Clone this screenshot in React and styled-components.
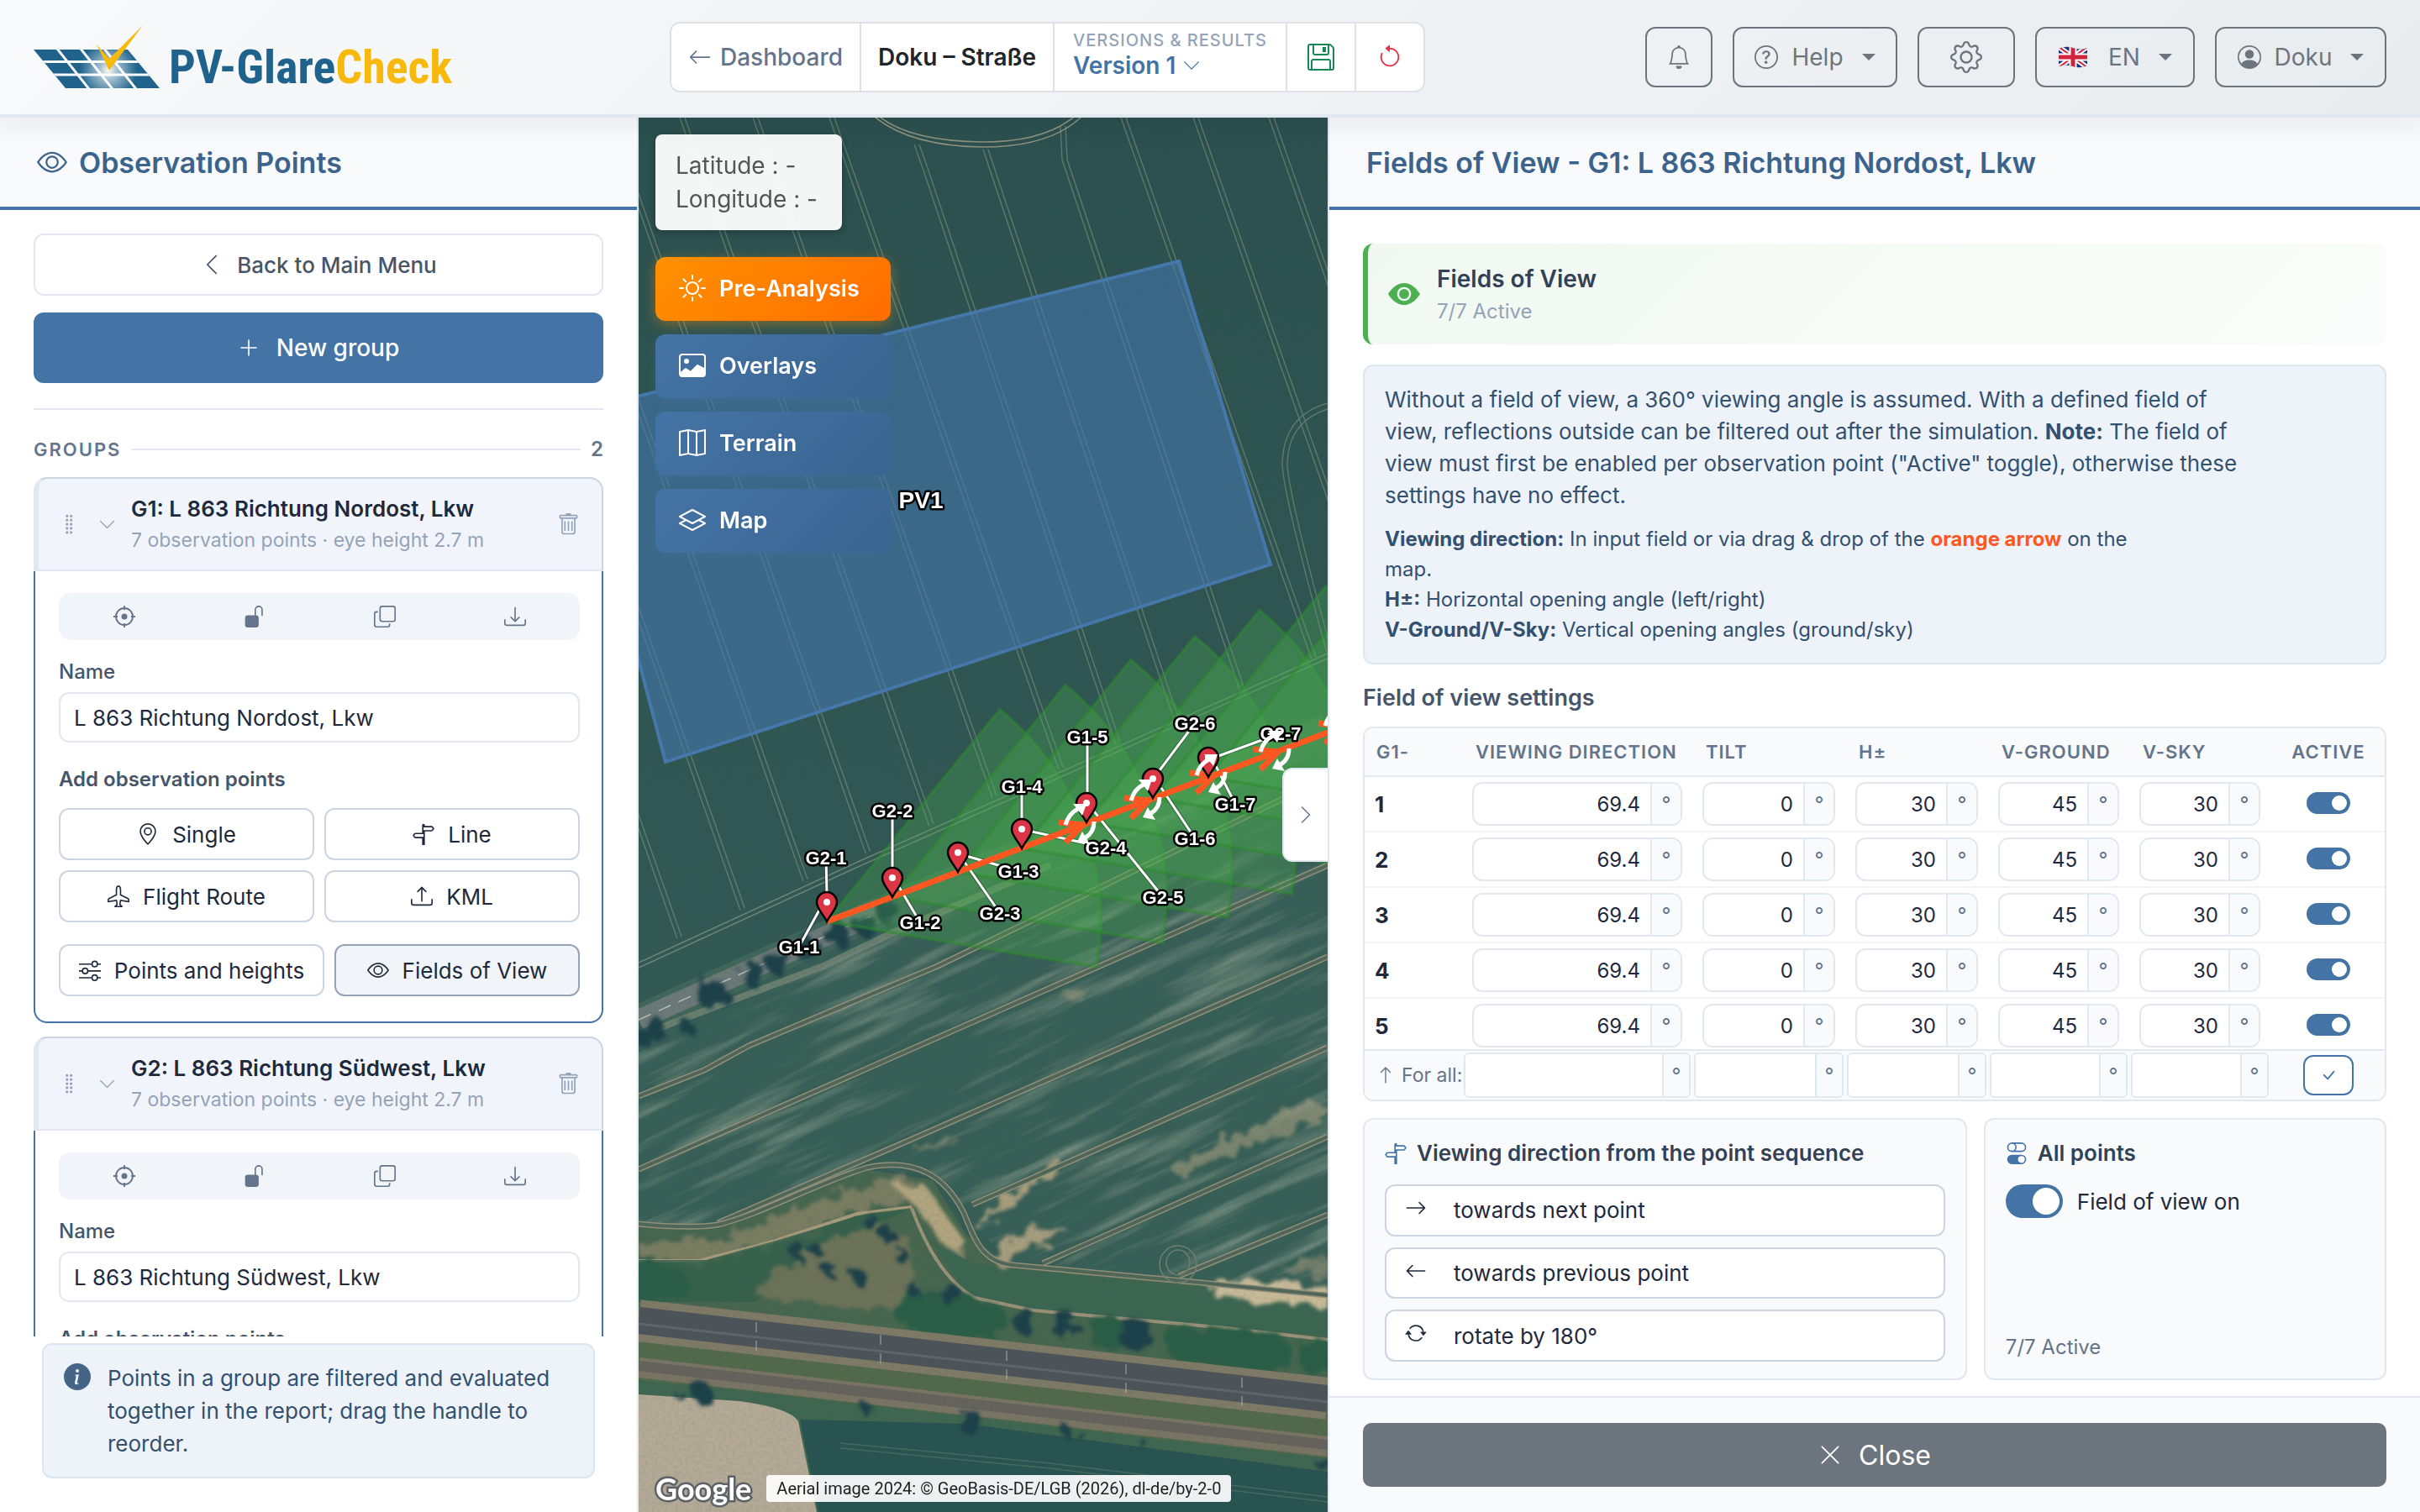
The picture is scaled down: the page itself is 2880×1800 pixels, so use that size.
import { useState } from 'react';
import styled, { createGlobalStyle, css } from 'styled-components';
import {
  BsAirplane,
  BsArrowCounterclockwise,
  BsArrowLeft,
  BsArrowRepeat,
  BsArrowRight,
  BsArrowUp,
  BsBell,
  BsCheckLg,
  BsChevronDown,
  BsChevronLeft,
  BsChevronRight,
  BsCopy,
  BsDownload,
  BsEye,
  BsEyeFill,
  BsFloppy,
  BsGear,
  BsGeoAlt,
  BsGripVertical,
  BsImage,
  BsInfoCircleFill,
  BsLayers,
  BsMap,
  BsPersonCircle,
  BsPlusLg,
  BsQuestionCircle,
  BsSignpostSplit,
  BsSliders,
  BsSun,
  BsToggles,
  BsTrash,
  BsUnlockFill,
  BsUpload,
  BsXLg,
} from 'react-icons/bs';

const GlobalStyle = createGlobalStyle`
  * {
    box-sizing: border-box;
  }
  body {
    margin: 0;
    font-family: Inter, 'Liberation Sans', sans-serif;
    font-size: 28px;
    color: #1e293b;
    background: #fff;
  }
  button, input {
    font: inherit;
    color: inherit;
    margin: 0;
  }
  button {
    cursor: pointer;
  }
  svg {
    flex: none;
  }
`;

// Shell

const Shell = styled.div`
  display: flex;
  flex-direction: column;
  height: 100vh;
`;

const Columns = styled.div`
  display: grid;
  grid-template-columns: 760px minmax(0, 1fr) 1300px;
  flex: 1;
  min-height: 0;
`;

// Top bar

const TopBar = styled.header`
  position: relative;
  z-index: 2;
  display: grid;
  grid-template-columns: 757px 1fr auto;
  align-items: center;
  height: 140px;
  padding: 0 40px;
  border-bottom: 4px solid #e2e8f0;
  background: linear-gradient(135deg, #f8f9fa, #e9ecef);
`;

const TopShadow = styled.div`
  position: relative;
  z-index: 1;
  height: 0;
  box-shadow: 0 0 28px 6px rgba(0, 0, 0, 0.12);
`;

const Logo = styled.a`
  display: flex;
  align-items: flex-end;
  gap: 11px;
  height: 76px;
  text-decoration: none;
`;

const LogoText = styled.span`
  font-family: 'Roboto Condensed', 'Liberation Sans Narrow', sans-serif;
  font-size: 56px;
  font-weight: 700;
  line-height: 52px;
  color: #1f638c;
`;

const LogoAccent = styled.span`
  color: #f7b90b;
`;

const ProjectBar = styled.nav`
  display: flex;
  justify-self: start;
  height: 84px;
  border: 2px solid #dee2e6;
  border-radius: 12px;
  background: #fff;
`;

const ProjectItem = styled.button`
  display: flex;
  align-items: center;
  justify-content: center;
  gap: 10px;
  min-width: 82px;
  padding: 0 20px;
  border: 0;
  border-left: ${p => (p.$first ? 0 : '2px solid #dee2e6')};
  background: none;
  color: ${p => p.$color || '#212529'};
  font-weight: ${p => p.$weight || 500};
  text-decoration: none;
`;

const VersionItem = styled(ProjectItem)`
  flex-direction: column;
  align-items: flex-start;
  gap: 0;
  padding: 0 22px 6px;
  color: #4473a5;
  font-weight: 600;
`;

const VersionCaption = styled.span`
  color: #94a3b8;
  font-size: 20px;
  font-weight: 500;
  line-height: 26px;
  letter-spacing: 1px;
`;

const VersionValue = styled.span`
  display: flex;
  align-items: center;
  gap: 8px;
  line-height: 34px;
`;

const TopActions = styled.div`
  display: flex;
  gap: 24px;
`;

const TopButton = styled.button`
  display: flex;
  align-items: center;
  justify-content: center;
  gap: 16px;
  width: ${p => p.$width}px;
  height: 72px;
  border: 2px solid #6c757d;
  border-radius: 12px;
  background: none;
  color: #6c757d;
`;

const Language = styled.span`
  padding-left: 8px;
`;

const Caret = styled.span`
  margin-left: 6px;
  border: 8px solid transparent;
  border-top-color: #6c757d;
  border-bottom: 0;
`;

// Shared panel parts

const Panel = styled.section`
  display: flex;
  flex-direction: column;
  min-height: 0;
  border: 0 solid #e2e8f0;
  border-width: ${p => (p.$side === 'left' ? '0 2px 0 0' : '0 0 0 2px')};
`;

const PanelTitle = styled.h1`
  display: flex;
  align-items: center;
  gap: 14px;
  height: 110px;
  margin: 0;
  padding: 0 44px;
  border-bottom: 4px solid #4473a5;
  background: #f8fafc;
  color: #3b638c;
  font-size: 34px;
  font-weight: 600;
  flex: none;
`;

const Button = styled.button`
  display: flex;
  align-items: center;
  justify-content: center;
  gap: 16px;
  height: 62px;
  border: 2px solid #cbd5e1;
  border-radius: 12px;
  background: #fff;
  color: #1e293b;
  font-size: 26px;
  ${p =>
    p.$active &&
    css`
      border-color: #94a3b8;
      background: #f1f5f9;
    `}
`;

// Left panel

const Sidebar = styled.div`
  display: flex;
  flex-direction: column;
  flex: 1;
  min-height: 0;
  padding: 28px 40px 40px;
`;

const BackButton = styled(Button)`
  height: 74px;
  border-color: #e2e8f0;
  color: #475569;
  font-weight: 500;
  flex: none;
`;

const NewButton = styled(BackButton)`
  gap: 20px;
  height: 84px;
  margin-top: 20px;
  border: 0;
  background: #4473a5;
  color: #fff;
  font-size: 28px;
`;

const Rule = styled.hr`
  width: 100%;
  margin: 30px 0;
  border: 0;
  border-top: 2px solid #e2e8f0;
  flex: none;
`;

const GroupsHead = styled.h2`
  display: flex;
  align-items: center;
  gap: 12px;
  margin: 0 0 16px;
  color: #64748b;
  font-size: 22px;
  font-weight: 600;
  line-height: 34px;
  letter-spacing: 2px;
  &::before {
    content: '';
    order: 1;
    flex: 1;
    height: 2px;
    background: #e2e8f0;
  }
`;

const GroupCount = styled.span`
  order: 2;
  font-size: 24px;
  letter-spacing: 0;
`;

const GroupList = styled.div`
  display: flex;
  flex-direction: column;
  gap: 16px;
  flex: 1;
  min-height: 0;
  overflow: hidden;
`;

const Group = styled.article`
  flex: none;
`;

const GroupHead = styled.div`
  display: flex;
  align-items: center;
  height: 112px;
  padding: 0 26px 0 24px;
  border: 2px solid #cbd5e1;
  border-left: 6px solid #e2e8f0;
  border-bottom-color: #e2e8f0;
  border-radius: 16px 16px 0 0;
  background: #f1f5fb;
  color: #94a3b8;
`;

const GroupName = styled.div`
  flex: 1;
  margin-left: 18px;
`;

const GroupTitle = styled.h3`
  margin: 0;
  color: #1e293b;
  font-size: 26px;
  font-weight: 600;
  line-height: 38px;
`;

const GroupMeta = styled.div`
  font-size: 23px;
  line-height: 36px;
`;

const IconButton = styled.button`
  display: flex;
  align-items: center;
  justify-content: center;
  padding: 0;
  border: 0;
  background: none;
  color: inherit;
`;

const Chevron = styled(IconButton)`
  margin-left: 21px;
`;

const GroupBody = styled.div`
  padding: 26px 26px 30px 28px;
  border: 2px solid #4473a5;
  border-top: 0;
  border-radius: 0 0 16px 16px;
`;

const GroupTools = styled.div`
  display: grid;
  grid-template-columns: repeat(4, 1fr);
  height: 56px;
  border-radius: 14px;
  background: #f1f5f9;
  color: #64748b;
`;

const FieldLabel = styled.label`
  display: block;
  padding: 22px 0 8px;
  color: #475569;
  font-size: 24px;
  font-weight: ${p => p.$weight || 500};
  line-height: 32px;
`;

const TextInput = styled.input`
  width: 100%;
  height: 60px;
  padding: 0 16px;
  border: 2px solid #e2e8f0;
  border-radius: 12px;
  font-size: 26px;
`;

const AddTitle = styled(FieldLabel).attrs({ as: 'div' })`
  padding: 28px 0 18px;
`;

const ButtonGrid = styled.div`
  display: grid;
  grid-template-columns: 1fr 1fr;
  gap: 12px;
`;

const ButtonRow = styled.div`
  display: grid;
  grid-template-columns: 316px 1fr;
  gap: 12px;
  margin-top: 26px;
`;

const Hint = styled.aside`
  display: flex;
  gap: 20px;
  margin: 8px 10px 0;
  padding: 20px 24px;
  border: 2px solid #dbe7f0;
  border-radius: 12px;
  background: #eef3fa;
  color: #33506f;
  font-size: 26px;
  line-height: 39px;
  svg {
    margin-top: 2px;
    color: #456486;
  }
`;

// Map

const MapArea = styled.main`
  position: relative;
  overflow: hidden;
  background: #2f5350;
`;

const MapCanvas = styled.svg`
  display: block;
  width: 100%;
  height: 100%;
`;

const MapOverlay = styled.div`
  position: absolute;
  top: 20px;
  left: 20px;
  display: flex;
  flex-direction: column;
  align-items: flex-start;
  gap: 16px;
`;

const Coordinates = styled.div`
  width: 222px;
  margin-bottom: 16px;
  padding: 17px 24px;
  border-radius: 8px;
  background: rgba(255, 255, 255, 0.95);
  box-shadow: 0 2px 8px rgba(0, 0, 0, 0.3);
  color: #555;
  font-size: 28px;
  line-height: 40px;
  white-space: pre;
`;

const MapButton = styled.button`
  display: flex;
  align-items: center;
  gap: 16px;
  width: 280px;
  height: 76px;
  padding: 0 28px 2px;
  border: 0;
  border-radius: 12px;
  background: linear-gradient(135deg, #4473a5, #3a6592);
  box-shadow: 0 4px 12px rgba(68, 115, 165, 0.3);
  color: #fff;
  font-size: 27px;
  font-weight: 600;
  ${p =>
    p.$hot &&
    css`
      background: linear-gradient(135deg, #ff9100, #ff6d00);
      box-shadow: 0 4px 16px rgba(255, 145, 0, 0.4);
    `}
`;

const PanelHandle = styled.button`
  position: absolute;
  top: 774px;
  right: 0;
  display: flex;
  align-items: center;
  justify-content: center;
  width: 54px;
  height: 112px;
  border: 2px solid #e2e8f0;
  border-right: 0;
  border-radius: 12px 0 0 12px;
  background: #fff;
  color: #64748b;
`;

const MapCredits = styled.footer`
  position: absolute;
  left: 20px;
  bottom: 6px;
  display: flex;
  align-items: center;
  gap: 18px;
`;

const GoogleMark = styled.span`
  color: #fff;
  font-family: Lato, sans-serif;
  font-size: 36px;
  font-weight: 700;
  line-height: 44px;
  paint-order: stroke fill;
  -webkit-text-stroke: 5px #5c6266;
`;

const Attribution = styled.span`
  padding: 0 12px;
  border-radius: 4px;
  background: rgba(255, 255, 255, 0.92);
  color: #222;
  font-family: Roboto, sans-serif;
  font-size: 20px;
  line-height: 32px;
  white-space: nowrap;
`;

const MapLabel = styled.text`
  fill: #fff;
  stroke: #000;
  stroke-width: 5px;
  stroke-linejoin: round;
  paint-order: stroke;
  text-anchor: middle;
  font-family: 'Liberation Sans', sans-serif;
  font-size: ${p => p.$size || 22}px;
  font-weight: 700;
`;

// Right panel

const Details = styled.div`
  flex: 1;
  min-height: 0;
  padding: 40px 40px 20px;
`;

const StatusCard = styled.div`
  display: flex;
  align-items: center;
  gap: 20px;
  height: 120px;
  padding: 0 24px;
  border-left: 6px solid #4caf50;
  border-radius: 12px;
  background: linear-gradient(135deg, #f1f8f1, #fafdfb);
  color: #4caf50;
`;

const StatusTitle = styled.h2`
  margin: 0;
  color: #334155;
  font-size: 28px;
  font-weight: 600;
  line-height: 42px;
`;

const StatusMeta = styled.div`
  color: #94a3b8;
  font-size: 24px;
  line-height: 36px;
`;

const InfoBox = styled.div`
  margin-top: 24px;
  padding: 21px 24px;
  border: 2px solid #dbe7f0;
  border-radius: 12px;
  background: #eef3fa;
  color: #33506f;
`;

const InfoText = styled.p`
  max-width: 1030px;
  margin: 0 0 15px;
  font-size: 26px;
  line-height: 38px;
`;

const InfoNotes = styled.p`
  max-width: 920px;
  margin: 0;
  font-size: 24px;
  line-height: 36px;
`;

const Orange = styled.strong`
  color: #ff5722;
`;

const SectionTitle = styled.h2`
  margin: 22px 0 16px;
  color: #475569;
  font-size: 27px;
  font-weight: 600;
  line-height: 36px;
`;

const TableBox = styled.div`
  height: 446px;
  overflow: hidden;
  border: 2px solid #e2e8f0;
  border-radius: 12px;
`;

const Table = styled.table`
  width: 100%;
  table-layout: fixed;
  border-collapse: separate;
  border-spacing: 0;
`;

const Th = styled.th`
  height: 58px;
  padding: 0 0 0 ${p => (p.$center ? 0 : 14)}px;
  border-bottom: 2px solid #e2e8f0;
  background: #f8fafc;
  color: #64748b;
  font-size: 22px;
  font-weight: 600;
  letter-spacing: 1px;
  text-align: ${p => (p.$center ? 'center' : 'left')};
  white-space: nowrap;
`;

const Td = styled.td`
  height: 66px;
  padding: ${p => (p.$center ? '0 0 6px' : '0 14px 0 10px')};
  border-bottom: 2px solid #f1f5f9;
  font-weight: 700;
  font-size: 26px;
  text-align: ${p => (p.$center ? 'center' : 'left')};
`;

const PointTd = styled(Td)`
  padding: 0 0 0 12px;
`;

const FootTd = styled.td`
  position: sticky;
  bottom: 0;
  height: 60px;
  padding: 0 ${p => (p.$center ? 0 : 4)}px 0 0;
  border-top: 2px solid #e2e8f0;
  background: #f8fafc;
  color: #64748b;
  text-align: ${p => (p.$center ? 'center' : 'left')};
`;

const ForAll = styled.span`
  display: flex;
  align-items: center;
  gap: 8px;
  padding-left: 14px;
  font-size: 23px;
  white-space: nowrap;
`;

const AngleBox = styled.label`
  display: flex;
  height: ${p => (p.$wide ? 54 : 52)}px;
  border: 2px solid #e2e8f0;
  border-radius: ${p => (p.$wide ? 6 : 12)}px;
  background: #fff;
  overflow: hidden;
`;

const AngleInput = styled.input`
  flex: 1;
  width: 0;
  padding: 0 12px;
  border: 0;
  background: none;
  font-size: 24px;
  font-weight: 400;
  text-align: right;
`;

const Unit = styled.span`
  display: flex;
  align-items: center;
  justify-content: center;
  width: ${p => (p.$wide ? 32 : 36)}px;
  border-left: 2px solid #e2e8f0;
  background: #f8fafc;
  color: #64748b;
  font-size: 24px;
  font-weight: 400;
`;

const ApplyButton = styled(Button)`
  display: inline-flex;
  width: 60px;
  height: 48px;
  border-color: #4473a5;
  color: #4473a5;
  vertical-align: middle;
`;

const Switch = styled.input.attrs({ type: 'checkbox', role: 'switch' })`
  appearance: none;
  width: ${p => (p.$large ? 68 : 52)}px;
  height: ${p => (p.$large ? 40 : 26)}px;
  border-radius: 20px;
  background: #cbd5e1;
  vertical-align: middle;
  &::before {
    content: '';
    display: block;
    width: ${p => (p.$large ? 32 : 18)}px;
    height: ${p => (p.$large ? 32 : 18)}px;
    margin: 4px;
    border-radius: 50%;
    background: #fff;
  }
  &:checked {
    background: #4473a5;
  }
  &:checked::before {
    margin-left: auto;
  }
`;

const Cards = styled.div`
  display: grid;
  grid-template-columns: 3fr 2fr;
  gap: 20px;
  margin-top: 20px;
`;

const Card = styled.section`
  display: flex;
  flex-direction: column;
  gap: 13px;
  height: 312px;
  padding: 20px 24px;
  border: 2px solid #e2e8f0;
  border-radius: 12px;
  background: #f8fafc;
`;

const CardTitle = styled.h2`
  display: flex;
  align-items: center;
  gap: 12px;
  margin: 0 0 4px;
  color: #334155;
  font-size: 26px;
  font-weight: 600;
  line-height: 40px;
  svg {
    color: #4473a5;
  }
`;

const ActionButton = styled(Button)`
  justify-content: flex-start;
  gap: 32px;
  padding: 0 22px;
  svg {
    margin-bottom: 6px;
  }
`;

const SwitchLabel = styled.label`
  display: flex;
  align-items: center;
  gap: 17px;
  font-size: 26px;
`;

const CardMeta = styled.div`
  margin: auto 0 0;
  color: #64748b;
  font-size: 24px;
  line-height: 34px;
`;

const PanelFooter = styled.footer`
  padding: 30px 40px;
  border-top: 2px solid #e2e8f0;
  background: #f8fafc;
`;

const CloseButton = styled(Button)`
  gap: 20px;
  width: 100%;
  height: 76px;
  border: 0;
  border-radius: 10px;
  background: #6c757d;
  color: #fff;
  font-size: 32px;
`;

// Drawings

const LogoMark = () => (
  <svg width="150" height="76" viewBox="0 0 150 76">
    <defs>
      <radialGradient id="glare" cx="89" cy="54" r="34" gradientUnits="userSpaceOnUse">
        <stop offset="0" stopColor="#fffbe8" />
        <stop offset="0.3" stopColor="#fff" stopOpacity="0.6" />
        <stop offset="1" stopColor="#fff" stopOpacity="0" />
      </radialGradient>
      <clipPath id="panel">
        <path d="M0 29H112L150 75H38Z" />
      </clipPath>
    </defs>
    <path d="M0 29H112L150 75H38Z" fill="#1f638c" />
    <g stroke="#f8f9fa" strokeWidth="3" clipPath="url(#panel)">
      <path d="M8 43.500H140M20 59H150" />
      <path d="M28 28L66 76M56 28L94 76M84 28L122 76" />
    </g>
    <path d="M0 29H112L150 75H38Z" fill="url(#glare)" />
    <path d="M75 23L90 40L130 0L90 54Z" fill="#f7b90b" />
  </svg>
);

const TargetIcon = () => (
  <svg width="26" height="26" viewBox="0 0 26 26" fill="none" stroke="currentColor" strokeWidth="1.800">
    <circle cx="13" cy="13" r="10" />
    <circle cx="13" cy="13" r="3.500" fill="currentColor" stroke="none" />
    <path d="M13 0V5M13 21V26M0 13H5M21 13H26" />
  </svg>
);

const FlagIcon = () => (
  <svg width="36" height="26" viewBox="0 0 36 26">
    <clipPath id="flag">
      <path d="M1 3Q9-1 18 2T35 2V23Q27 27 18 24T1 24Z" />
    </clipPath>
    <g clipPath="url(#flag)">
      <rect width="36" height="26" fill="#1b2f80" />
      <path d="M0 0L36 26M36 0L0 26" stroke="#fff" strokeWidth="6" />
      <path d="M0 0L36 26M36 0L0 26" stroke="#d0243c" strokeWidth="2" />
      <path d="M18 0V26M0 13H36" stroke="#fff" strokeWidth="9" />
      <path d="M18 0V26M0 13H36" stroke="#d0243c" strokeWidth="5" />
    </g>
  </svg>
);

const points = [
  [984, 1097],
  [1062, 1068],
  [1140, 1038],
  [1216, 1010],
  [1293, 979],
  [1372, 950],
  [1438, 925],
];

const labels = [
  ['G1-1', 951, 1135, 978, 1078],
  ['G2-1', 983, 1029, 984, 1064],
  ['G2-2', 1062, 973, 1062, 1036],
  ['G1-2', 1095, 1106, 1070, 1056],
  ['G1-3', 1212, 1045, 1150, 1019],
  ['G2-3', 1190, 1095, 1147, 1025],
  ['G1-4', 1216, 944, 1216, 978],
  ['G2-4', 1316, 1017, 1228, 990],
  ['G1-5', 1294, 885, 1294, 948],
  ['G2-5', 1384, 1076, 1302, 966],
  ['G2-6', 1422, 869, 1380, 917],
  ['G1-6', 1422, 1006, 1382, 938],
  ['G1-7', 1470, 965, 1447, 912],
  ['G2-7', 1524, 881, 1450, 900],
];

const upperTracks = [375, 462, 549, 636, 722, 809, 896, 987, 1334, 1420, 1510];

const lowerTracks = [
  'M760 1305L838 1274L891 1245L1116 1150L1580 925',
  'M760 1392L1309 1150L1580 1030',
  'M854 1456L1074 1361L1555 1150L1580 1139',
  'M1157 1434L1580 1247',
  'M1241 1504L1580 1353',
  'M1403 1519L1580 1446',
  'M760 1457Q820 1463 854 1458C900 1448 980 1405 1032 1390C1090 1378 1125 1400 1147 1444C1160 1475 1168 1502 1205 1506L1430 1527L1580 1542',
];

const treeSpots = [
  [842, 1178, 18],
  [893, 1157, 14],
  [923, 1143, 14],
  [778, 1222, 12],
  [763, 1232, 11],
  [955, 1124, 15],
  [992, 1108, 15],
  [1024, 1096, 14],
  [1052, 1082, 14],
  [814, 1220, 8],
  [1031, 1449, 9],
  [1052, 1466, 9],
  [1018, 1516, 9],
  [984, 1508, 8],
  [966, 1483, 8],
  [947, 1487, 9],
  [1084, 1534, 7],
  [1068, 1490, 8],
  [1127, 1537, 12],
  [1213, 1567, 14],
  [1262, 1573, 16],
  [1346, 1583, 20],
  [1152, 1690, 14],
  [1264, 1700, 7],
  [1285, 1708, 5],
  [832, 1654, 12],
  [805, 1656, 6],
  [1028, 1675, 7],
  [1356, 1715, 5],
  [1572, 1740, 8],
];

const hedges = [
  [1085, 1558, 22],
  [1110, 1566, 26],
  [1145, 1568, 28],
  [1175, 1572, 22],
  [1318, 1588, 22],
  [1410, 1600, 22],
  [1440, 1604, 26],
  [1475, 1606, 26],
  [1510, 1610, 24],
  [1570, 1618, 22],
  [775, 1525, 24],
  [800, 1530, 20],
];

const masts = [
  [900, 1574],
  [1048, 1589],
  [1198, 1608],
  [1340, 1624],
  [1478, 1640],
];

const cone = ([x, y]) => `M${x} ${y}L${x + 206} ${y - 252}A326 326 0 0 1 ${x + 321} ${y + 54}Z`;

const AerialMap = () => (
  <MapCanvas viewBox="760 140 820 1660" preserveAspectRatio="xMidYMid slice" role="img" aria-label="Aerial map">
    <defs>
      <linearGradient id="fieldUpper" x1="0" y1="0" x2="0" y2="1">
        <stop offset="0" stopColor="#2b504f" />
        <stop offset="1" stopColor="#375e57" />
      </linearGradient>
      <clipPath id="upperClip">
        <path d="M760 140H1580V776L1021 1020L760 1138Z" />
      </clipPath>
      <clipPath id="lowerClip">
        <path d="M760 1250L1580 880V1540L1205 1506L1150 1450L1110 1400L1032 1390L854 1458H760Z" />
      </clipPath>
      <clipPath id="wastelandClip">
        <path d="M760 1458H854L1032 1392L1100 1395L1150 1470L1205 1508L1580 1544V1600H760Z" />
      </clipPath>
      {/* stretched noise gives the dry streaks along the sowing direction */}
      <filter id="streaks" x="0" y="0" width="100%" height="100%">
        <feTurbulence type="fractalNoise" baseFrequency="0.005 0.05" numOctaves="4" seed="11" />
        <feColorMatrix values="0 0 0 0 0.58  0 0 0 0 0.58  0 0 0 0 0.46  2.2 0 0 0 -1.1" />
      </filter>
      <filter id="grain" x="0" y="0" width="100%" height="100%">
        <feTurbulence type="fractalNoise" baseFrequency="0.25" numOctaves="3" seed="4" />
        <feColorMatrix values="0 0 0 0 0.05  0 0 0 0 0.12  0 0 0 0 0.1  1.3 0 0 0 -0.5" />
      </filter>
      <filter id="patchy" x="-20%" y="-20%" width="140%" height="140%">
        <feTurbulence type="fractalNoise" baseFrequency="0.05" numOctaves="4" seed="7" result="n" />
        <feDisplacementMap in="SourceGraphic" in2="n" scale="26" />
        <feGaussianBlur stdDeviation="2" />
      </filter>
    </defs>

    <rect x="760" y="140" width="820" height="1660" fill="url(#fieldUpper)" />

    {/* upper field */}
    <g clipPath="url(#upperClip)" fill="none" stroke="#8d9a88" strokeWidth="1.400" opacity="0.55">
      {upperTracks.map(x => (
        <path key={x} d={`M${x} 140L${x + 373} 1200M${x + 6} 140L${x + 379} 1200`} />
      ))}
      <path d="M1088 172L1098 200L1433 1200M1094 172L1104 200L1439 1200" />
      <path d="M1170 178L1184 220L1512 1200M1176 178L1190 220L1518 1200" />
      <path d="M1262 150L1264 190L1602 1200M1268 150L1270 190L1608 1200" />
      <path d="M1580 480Q1526 495 1526 555Q1530 600 1580 780M1580 487Q1532 502 1532 555Q1536 600 1586 780" />
    </g>
    <path
      d="M1048 140Q1085 168 1170 169Q1240 169 1277 140M1042 140Q1085 174 1170 175Q1248 175 1286 140"
      fill="none"
      stroke="#a8a28a"
      strokeWidth="1.600"
      opacity="0.8"
    />

    {/* lower field */}
    <path d="M760 1200L1060 1075L1580 860V1545L1205 1506L1150 1450L1110 1400L1032 1390L854 1458H760Z" fill="#385f57" />
    <g clipPath="url(#lowerClip)">
      <rect x="500" y="800" width="1400" height="1000" filter="url(#streaks)" transform="rotate(-25 1170 1300)" opacity="0.5" />
    </g>
    <path d="M760 1152L1021 1032L1580 784M760 1146L1021 1026L1580 778" fill="none" stroke="#6f8474" strokeWidth="1.500" />

    {/* country road */}
    <path d="M760 1214L880 1160L1060 1080L1580 868" fill="none" stroke="#41665a" strokeWidth="36" />
    <path d="M760 1214L880 1160L1060 1080" fill="none" stroke="#6c7977" strokeWidth="24" />
    <path d="M760 1214L880 1160L1060 1080" fill="none" stroke="#b9c0bc" strokeWidth="1.500" strokeDasharray="16 10" />
    <path d="M760 1234L810 1214L980 1150L1063 1110L1250 1030" fill="none" stroke="#7f8b78" strokeWidth="8" opacity="0.7" />

    {/* wasteland between field and motorway */}
    <path d="M760 1458H854L1032 1392L1110 1405L1150 1470L1205 1508L1580 1544V1680L760 1600Z" fill="#47664f" />
    <g clipPath="url(#wastelandClip)">
      <g filter="url(#patchy)">
        <path d="M760 1480L860 1475L1040 1405L1080 1400L1130 1450L1150 1490L1145 1500L1110 1450L1080 1430L1030 1440L920 1480L830 1508L760 1495Z" fill="#958b6c" opacity="0.65" />
        <path d="M1060 1410L1100 1410L1150 1480L1140 1492L1120 1480L1090 1435Z" fill="#b3a57e" />
      </g>
      <path d="M760 1501H832L920 1478L1020 1445L1085 1437" fill="none" stroke="#a89b7c" strokeWidth="4" />
    </g>
    <path d="M760 1500H840L920 1478L1030 1445L1085 1438L1060 1450L960 1490L900 1550H760Z" fill="#33604b" opacity="0.8" />
    <g filter="url(#patchy)">
      <path d="M900 1530L980 1480L1040 1455L1080 1470L1090 1530L1060 1560L900 1545Z" fill="#75775a" opacity="0.8" />
    </g>
    <path d="M1160 1505L1205 1510L1580 1548V1590L1220 1560L1150 1540L1110 1480Z" fill="#3c6652" />
    <path d="M1085 1438Q1115 1520 1160 1545L1230 1560L1450 1580L1580 1595" fill="none" stroke="#9a9278" strokeWidth="4" />

    {/* dry spots in the crop */}
    <g filter="url(#patchy)" fill="#a89e7e">
      <path d="M1162 1470Q1165 1440 1260 1378L1265 1390L1180 1452Z" />
      <path d="M1180 1500Q1200 1450 1275 1468L1220 1488L1190 1508Z" />
      <path d="M1400 1388L1560 1310L1580 1320V1332L1450 1378L1400 1400Z" opacity="0.6" />
      <path d="M1260 1190L1290 1172L1280 1190Z" opacity="0.5" />
      <path d="M1090 1368L1140 1352L1135 1366L1090 1372Z" opacity="0.5" />
      <path d="M1450 1524L1520 1528L1580 1532V1556L1500 1548L1440 1540Z" fill="#c9bb98" />
      <path d="M1520 1505L1580 1495V1518L1540 1518Z" opacity="0.5" />
    </g>

    <g fill="none">
      {lowerTracks.map(d => (
        <g key={d}>
          <path d={d} stroke="#94907a" strokeWidth="7" />
          <path d={d} stroke="#506658" strokeWidth="4" />
        </g>
      ))}
      <ellipse cx="1402" cy="1505" rx="22" ry="22" stroke="#6f8070" strokeWidth="1.500" />
      <ellipse cx="1402" cy="1503" rx="14" ry="15" stroke="#6f8070" strokeWidth="1.500" />
    </g>

    {/* hedges and trees */}
    <g filter="url(#patchy)">
      {hedges.map(([x, y, r]) => (
        <circle key={`${x}-${y}`} cx={x} cy={y} r={r} fill="#2c5d46" />
      ))}
    </g>

    {/* motorway, railway and verges */}
    <path d="M760 1550L1580 1644V1745L760 1650Z" fill="#52694b" />
    <path d="M760 1572L1580 1665" stroke="#7f7a66" strokeWidth="50" />
    <path d="M760 1572L1580 1665" stroke="#4d5459" strokeWidth="32" />
    <path d="M760 1576L1580 1669" stroke="#5f666a" strokeWidth="3" />
    <path d="M760 1628L1580 1722" stroke="#7a7464" strokeWidth="24" />
    <path d="M760 1626L1580 1720" stroke="#66625c" strokeWidth="12" />
    <g stroke="#b4b8b5" strokeWidth="1.500" opacity="0.6">
      {masts.map(([x, y]) => (
        <path key={x} d={`M${x} ${y}V${y + 12}M${x} ${y + 22}V${y + 34}`} />
      ))}
    </g>
    <path d="M760 1643L880 1655L1580 1736V1800H760Z" fill="#3f6650" />
    <path d="M952 1690L1150 1695L1580 1752V1800H974Z" fill="#285350" />
    <path d="M760 1660L880 1668Q940 1676 950 1692L972 1800H760Z" fill="#b4aa96" />
    <path d="M1000 1718L1250 1742L1580 1782M1000 1724L1250 1748L1580 1788" fill="none" stroke="#47695f" strokeWidth="1.500" />

    <g filter="url(#patchy)">
      {treeSpots.map(([x, y, r]) => (
        <circle key={`${x}-${y}`} cx={x + 4} cy={y + 4} r={r} fill="#1f4048" />
      ))}
    </g>

    <rect x="760" y="140" width="820" height="1660" filter="url(#grain)" opacity="0.2" />

    {/* module area */}
    <path
      d="M1403 311L1512 672L792 907L760 786L682 491Z"
      fill="#4577ab"
      fillOpacity="0.6"
      stroke="#4577ab"
      strokeWidth="4"
    />
    <MapLabel x="1096" y="605" $size="28">
      PV1
    </MapLabel>

    {/* view cones */}
    {points.map(p => (
      <path
        key={p[0]}
        d={cone(p)}
        fill="#4caf50"
        fillOpacity="0.28"
        stroke="#2e8b2e"
        strokeOpacity="0.5"
        strokeWidth="4"
      />
    ))}

    <g stroke="#000" strokeOpacity="0.3" strokeWidth="5">
      {labels.map(([name, x, y, px, py]) => (
        <path key={name} d={`M${px} ${py}L${x} ${y - 8}`} />
      ))}
    </g>
    <g stroke="#fff" strokeWidth="3">
      {labels.map(([name, x, y, px, py]) => (
        <path key={name} d={`M${px} ${py}L${x} ${y - 8}`} />
      ))}
    </g>

    <g fill="none" stroke="#ff5722" strokeWidth="7">
      <path d="M984 1097L1580 872" />
      {points.map(([x, y]) => (
        <path key={x} d={`M${x + 276} ${y - 118}L${x + 305} ${y - 115}L${x + 284} ${y - 94}`} />
      ))}
    </g>

    {points.map(([x, y]) => (
      <g key={x} transform={`translate(${x} ${y})`}>
        <path d="M0 0C-5-10-12-15-12-23A12 12 0 0 1 12-23C12-15 5-10 0 0Z" fill="#dc3545" stroke="#000" strokeWidth="2.500" />
        <circle cy="-23" r="4" fill="#fff" />
      </g>
    ))}

    {labels.map(([name, x, y]) => (
      <MapLabel key={name} x={x} y={y}>
        {name}
      </MapLabel>
    ))}

    {/* rotate handles at the arrow tips */}
    {points.map(([x, y]) => (
      <g key={x} transform={`translate(${x + 305} ${y - 115})`} fill="none" stroke="#fff" strokeWidth="5">
        <path d="M-21 0Q-17-14-6-19" />
        <path d="M-12-25L4-25L-1-11Z" fill="#fff" stroke="none" />
        <path d="M13-4Q13 9 3 15" />
        <path d="M8 23L-7 20L-1 8Z" fill="#fff" stroke="none" />
      </g>
    ))}
  </MapCanvas>
);

// Content

const mapButtons = [
  ['Pre-Analysis', BsSun],
  ['Overlays', BsImage],
  ['Terrain', BsMap],
  ['Map', BsLayers],
];

const groups = [
  { id: 'G1', name: 'L 863 Richtung Nordost, Lkw' },
  { id: 'G2', name: 'L 863 Richtung Südwest, Lkw' },
];

const angleColumns = ['Viewing direction', 'Tilt', 'H±', 'V-Ground', 'V-Sky'];
const angles = ['69.4', '0', '30', '45', '30'];
const columnWidths = [118, 274, 182, 170, 168, 168, 134];

const Angle = ({ label, value, wide }) => (
  <AngleBox $wide={wide}>
    <AngleInput aria-label={label} defaultValue={value} />
    <Unit $wide={wide}>°</Unit>
  </AngleBox>
);

const GroupCard = ({ group }) => {
  const [name, setName] = useState(group.name);
  const inputId = `name-${group.id}`;

  return (
    <Group>
      <GroupHead>
        <BsGripVertical size={26} />
        <Chevron aria-label="Collapse">
          <BsChevronDown size={21} />
        </Chevron>
        <GroupName>
          <GroupTitle>
            {group.id}: {name}
          </GroupTitle>
          <GroupMeta>7 observation points · eye height 2.7 m</GroupMeta>
        </GroupName>
        <IconButton aria-label="Delete group">
          <BsTrash size={27} />
        </IconButton>
      </GroupHead>
      <GroupBody>
        <GroupTools>
          <IconButton aria-label="Center">
            <TargetIcon />
          </IconButton>
          <IconButton aria-label="Lock">
            <BsUnlockFill size={26} />
          </IconButton>
          <IconButton aria-label="Copy">
            <BsCopy size={26} />
          </IconButton>
          <IconButton aria-label="Download">
            <BsDownload size={26} />
          </IconButton>
        </GroupTools>
        <FieldLabel htmlFor={inputId}>Name</FieldLabel>
        <TextInput id={inputId} value={name} onChange={e => setName(e.target.value)} />
        <AddTitle $weight={600}>Add observation points</AddTitle>
        <ButtonGrid>
          <Button>
            <BsGeoAlt size={26} />
            Single
          </Button>
          <Button>
            <BsSignpostSplit size={26} />
            Line
          </Button>
          <Button>
            <BsAirplane size={26} />
            Flight Route
          </Button>
          <Button>
            <BsUpload size={26} />
            KML
          </Button>
        </ButtonGrid>
        <ButtonRow>
          <Button>
            <BsSliders size={26} />
            Points and heights
          </Button>
          <Button $active>
            <BsEye size={26} />
            Fields of View
          </Button>
        </ButtonRow>
      </GroupBody>
    </Group>
  );
};

const Header = () => (
  <TopBar>
    <Logo href="#">
      <LogoMark />
      <LogoText>
        PV-Glare<LogoAccent>Check</LogoAccent>
      </LogoText>
    </Logo>
    <ProjectBar>
      <ProjectItem as="a" href="#" $first $color="#64748b">
        <BsArrowLeft size={28} />
        Dashboard
      </ProjectItem>
      <ProjectItem $weight={600}>Doku – Straße</ProjectItem>
      <VersionItem>
        <VersionCaption>VERSIONS &amp; RESULTS</VersionCaption>
        <VersionValue>
          Version 1
          <BsChevronDown size={22} />
        </VersionValue>
      </VersionItem>
      <ProjectItem aria-label="Save" $color="#198754">
        <BsFloppy size={32} />
      </ProjectItem>
      <ProjectItem aria-label="Reset" $color="#dc3545">
        <BsArrowCounterclockwise size={30} />
      </ProjectItem>
    </ProjectBar>
    <TopActions>
      <TopButton $width={80} aria-label="Notifications">
        <BsBell size={28} />
      </TopButton>
      <TopButton $width={196}>
        <BsQuestionCircle size={28} />
        Help
        <Caret />
      </TopButton>
      <TopButton $width={116} aria-label="Settings">
        <BsGear size={38} />
      </TopButton>
      <TopButton $width={190}>
        <FlagIcon />
        <Language>EN</Language>
        <Caret />
      </TopButton>
      <TopButton $width={204}>
        <BsPersonCircle size={28} />
        Doku
        <Caret />
      </TopButton>
    </TopActions>
  </TopBar>
);

const ViewTable = () => (
  <TableBox>
    <Table>
      <colgroup>
        {columnWidths.map((width, i) => (
          <col key={i} width={width} />
        ))}
      </colgroup>
      <thead>
        <tr>
          <Th>G1-</Th>
          {angleColumns.map(name => (
            <Th key={name}>{name.toUpperCase()}</Th>
          ))}
          <Th $center>ACTIVE</Th>
        </tr>
      </thead>
      <tbody>
        {[1, 2, 3, 4, 5, 6, 7].map(n => (
          <tr key={n}>
            <PointTd>{n}</PointTd>
            {angles.map((value, i) => (
              <Td key={angleColumns[i]}>
                <Angle label={`${angleColumns[i]} ${n}`} value={value} />
              </Td>
            ))}
            <Td $center>
              <Switch defaultChecked aria-label={`Active ${n}`} />
            </Td>
          </tr>
        ))}
      </tbody>
      <tfoot>
        <tr>
          <FootTd>
            <ForAll>
              <BsArrowUp size={22} />
              For all:
            </ForAll>
          </FootTd>
          {angleColumns.map(name => (
            <FootTd key={name}>
              <Angle label={`${name} for all`} wide />
            </FootTd>
          ))}
          <FootTd $center>
            <ApplyButton aria-label="Apply to all">
              <BsCheckLg size={20} />
            </ApplyButton>
          </FootTd>
        </tr>
      </tfoot>
    </Table>
  </TableBox>
);

const App = () => (
  <>
    <GlobalStyle />
    <Shell>
      <Header />
      <TopShadow />
      <Columns>
        <Panel $side="left">
          <PanelTitle>
            <BsEye size={36} />
            Observation Points
          </PanelTitle>
          <Sidebar>
            <BackButton>
              <BsChevronLeft size={28} />
              Back to Main Menu
            </BackButton>
            <NewButton>
              <BsPlusLg size={26} />
              New group
            </NewButton>
            <Rule />
            <GroupsHead>
              GROUPS <GroupCount>2</GroupCount>
            </GroupsHead>
            <GroupList>
              {groups.map(group => (
                <GroupCard key={group.id} group={group} />
              ))}
            </GroupList>
            <Hint>
              <BsInfoCircleFill size={32} />
              <span>Points in a group are filtered and evaluated together in the report; drag the handle to reorder.</span>
            </Hint>
          </Sidebar>
        </Panel>

        <MapArea>
          <AerialMap />
          <MapOverlay>
            <Coordinates>
              {'Latitude : -\n'}
              {'Longitude : -'}
            </Coordinates>
            {mapButtons.map(([label, Icon], i) => (
              <MapButton key={label} $hot={i === 0}>
                <Icon size={32} />
                {label}
              </MapButton>
            ))}
          </MapOverlay>
          <PanelHandle aria-label="Collapse panel">
            <BsChevronRight size={24} />
          </PanelHandle>
          <MapCredits>
            <GoogleMark>Google</GoogleMark>
            <Attribution>Aerial image 2024: © GeoBasis-DE/LGB (2026), dl-de/by-2-0</Attribution>
          </MapCredits>
        </MapArea>

        <Panel $side="right">
          <PanelTitle>Fields of View - G1: L 863 Richtung Nordost, Lkw</PanelTitle>
          <Details>
            <StatusCard>
              <BsEyeFill size={38} />
              <div>
                <StatusTitle>Fields of View</StatusTitle>
                <StatusMeta>7/7 Active</StatusMeta>
              </div>
            </StatusCard>
            <InfoBox>
              <InfoText>
                Without a field of view, a 360° viewing angle is assumed. With a defined field of view, reflections
                outside can be filtered out after the simulation. <strong>Note:</strong> The field of view must first be
                enabled per observation point ("Active" toggle), otherwise these settings have no effect.
              </InfoText>
              <InfoNotes>
                <strong>Viewing direction:</strong> In input field or via drag &amp; drop of the{' '}
                <Orange>orange arrow</Orange> on the map.
                <br />
                <strong>H±:</strong> Horizontal opening angle (left/right)
                <br />
                <strong>V-Ground/V-Sky:</strong> Vertical opening angles (ground/sky)
              </InfoNotes>
            </InfoBox>
            <SectionTitle>Field of view settings</SectionTitle>
            <ViewTable />
            <Cards>
              <Card>
                <CardTitle>
                  <BsSignpostSplit size={26} />
                  Viewing direction from the point sequence
                </CardTitle>
                <ActionButton>
                  <BsArrowRight size={26} />
                  towards next point
                </ActionButton>
                <ActionButton>
                  <BsArrowLeft size={26} />
                  towards previous point
                </ActionButton>
                <ActionButton>
                  <BsArrowRepeat size={26} />
                  rotate by 180°
                </ActionButton>
              </Card>
              <Card>
                <CardTitle>
                  <BsToggles size={26} />
                  All points
                </CardTitle>
                <SwitchLabel>
                  <Switch $large defaultChecked />
                  Field of view on
                </SwitchLabel>
                <CardMeta>7/7 Active</CardMeta>
              </Card>
            </Cards>
          </Details>
          <PanelFooter>
            <CloseButton>
              <BsXLg size={28} />
              Close
            </CloseButton>
          </PanelFooter>
        </Panel>
      </Columns>
    </Shell>
  </>
);

export default App;
